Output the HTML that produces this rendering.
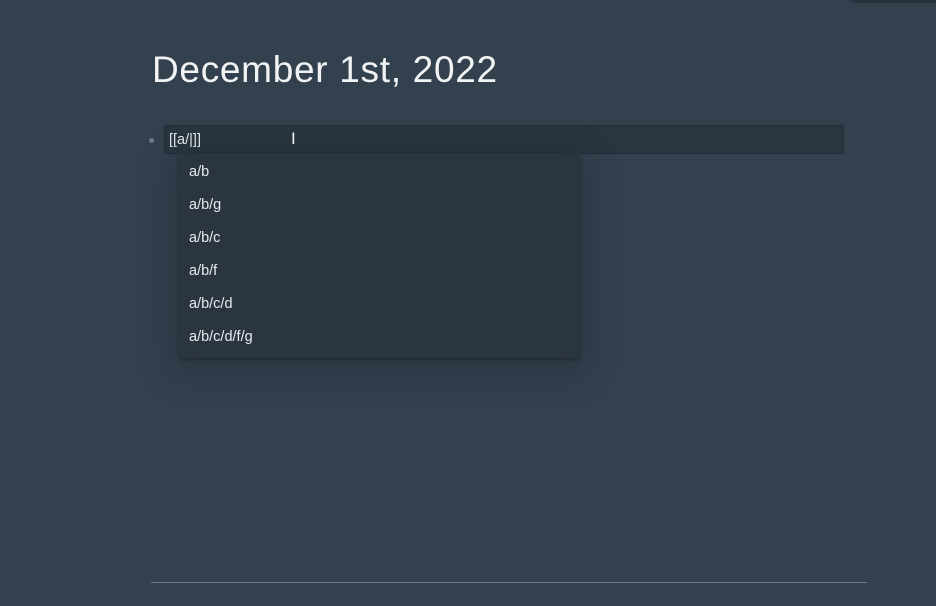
<!DOCTYPE html>
<html><head><style>
body{margin:0;width:936px;height:606px;background:#33404d;font-family:"Liberation Sans",sans-serif;overflow:hidden;position:relative}
.t{position:absolute;left:152px;top:49px;font-size:37px;color:#f1f3f5;letter-spacing:0.7px}
.dot{position:absolute;left:149px;top:138px;width:5px;height:5px;border-radius:50%;background:#6c7a87}
.ed{position:absolute;left:164px;top:125px;width:680px;height:29px;background:#29353f;border:1px solid #222d37;box-sizing:border-box}
.ed span{position:absolute;left:4px;top:6px;font-size:14.5px;color:#e6eaee}
.dd{position:absolute;left:179px;top:153px;width:400px;height:205px;background:#2a3540;box-shadow:0 8px 30px 8px rgba(20,28,36,0.22),0 2px 4px rgba(0,0,0,.3)}
.dd div{position:absolute;left:10px;font-size:14.5px;color:#e6eaee}
.hr{position:absolute;left:151px;top:582px;width:716px;height:1px;background:#6b7886}
.tab{position:absolute;left:850px;top:-6px;width:100px;height:9px;border-radius:6px;background:#27323c}
.cur{position:absolute;left:291px;top:129px;font-size:17px;color:#fff}
</style></head><body>
<div class="tab"></div>
<div class="t">December 1st, 2022</div>
<div class="dot"></div>
<div class="ed"><span>[[a/|]]</span></div>
<div class="cur">I</div>
<div class="dd">
<div style="top:11px">a/b</div>
<div style="top:44px">a/b/g</div>
<div style="top:77px">a/b/c</div>
<div style="top:110px">a/b/f</div>
<div style="top:143px">a/b/c/d</div>
<div style="top:176px">a/b/c/d/f/g</div>
</div>
<div class="hr"></div>
</body></html>
